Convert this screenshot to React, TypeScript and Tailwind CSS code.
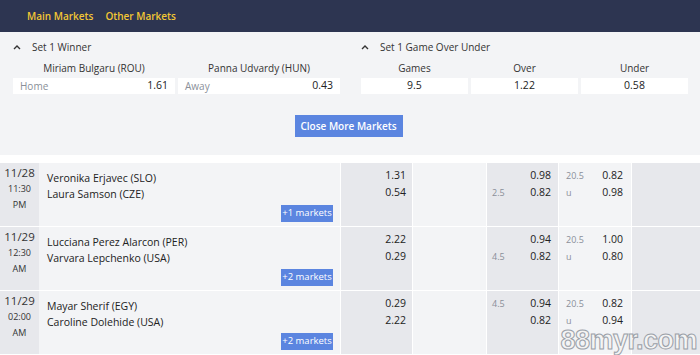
import React from "react";

const font = { fontFamily: '"Open Sans", "Noto Sans", sans-serif' };

function Chevron() {
  return (
    <svg width="8" height="6" viewBox="0 0 8 6" className="mr-[11px]">
      <path d="M1 5 L4 2 L7 5" fill="none" stroke="#333" strokeWidth="1.4" />
    </svg>
  );
}

type Row = {
  date: string;
  time: string;
  ampm: string;
  home: string;
  away: string;
  more: string;
  a: [string, string];
  c: [string, string, string, string];
  d: [string, string, string, string];
};

const rows: Row[] = [
  {
    date: "11/28",
    time: "11:30",
    ampm: "PM",
    home: "Veronika Erjavec (SLO)",
    away: "Laura Samson (CZE)",
    more: "+1 markets",
    a: ["1.31", "0.54"],
    c: ["", "0.98", "2.5", "0.82"],
    d: ["20.5", "0.82", "u", "0.98"],
  },
  {
    date: "11/29",
    time: "12:30",
    ampm: "AM",
    home: "Lucciana Perez Alarcon (PER)",
    away: "Varvara Lepchenko (USA)",
    more: "+2 markets",
    a: ["2.22", "0.29"],
    c: ["", "0.94", "4.5", "0.82"],
    d: ["20.5", "1.00", "u", "0.80"],
  },
  {
    date: "11/29",
    time: "02:00",
    ampm: "AM",
    home: "Mayar Sherif (EGY)",
    away: "Caroline Dolehide (USA)",
    more: "+2 markets",
    a: ["0.29", "2.22"],
    c: ["4.5", "0.94", "", "0.82"],
    d: ["20.5", "0.82", "u", "0.94"],
  },
];

function OddLine({ label, value }: { label: string; value: string }) {
  return (
    <div className="flex h-[17px] items-center justify-between">
      <span className="text-[9px] text-[#8a8f99]">{label}</span>
      <span className="text-[10.5px] text-[#222]">{value}</span>
    </div>
  );
}

export default function App() {
  return (
    <div className="relative w-[700px] h-[355px] overflow-hidden bg-white" style={font}>
      {/* header */}
      <div className="h-[32px] bg-[#2d3551] flex items-center pl-[27px] gap-[12px]">
        <span className="text-[10px] font-semibold text-[#f3c734] whitespace-nowrap">Main Markets</span>
        <span className="text-[10px] font-semibold text-[#f3c734] whitespace-nowrap">Other Markets</span>
      </div>

      {/* expanded markets */}
      <div className="h-[123px] bg-[#f3f4f6] pt-[8px]">
        <div className="flex">
          <div className="w-[350px] pl-[13px]">
            <div className="flex items-center h-[14px] text-[10px] text-[#333]">
              <Chevron />
              Set 1 Winner
            </div>
            <div className="flex gap-[3px] mt-[6px]">
              {[
                ["Miriam Bulgaru (ROU)", "Home", "1.61"],
                ["Panna Udvardy (HUN)", "Away", "0.43"],
              ].map(([n, l, v]) => (
                <div key={n} className="w-[162px]">
                  <div className="h-[16px] flex items-center justify-center text-[10px] text-[#333]">{n}</div>
                  <div className="mt-[2px] h-[16px] bg-white flex items-center justify-between px-[7px]">
                    <span className="text-[10px] text-[#8a8f99]">{l}</span>
                    <span className="text-[10.5px] text-[#222]">{v}</span>
                  </div>
                </div>
              ))}
            </div>
          </div>
          <div className="w-[350px] pl-[11px]">
            <div className="flex items-center h-[14px] text-[10px] text-[#333]">
              <Chevron />
              Set 1 Game Over Under
            </div>
            <div className="flex gap-[3px] mt-[6px]">
              {[
                ["Games", "9.5"],
                ["Over", "1.22"],
                ["Under", "0.58"],
              ].map(([n, v]) => (
                <div key={n} className="w-[107px]">
                  <div className="h-[16px] flex items-center justify-center text-[10px] text-[#333]">{n}</div>
                  <div className="mt-[2px] h-[16px] bg-white flex items-center justify-center">
                    <span className="text-[10.5px] text-[#222]">{v}</span>
                  </div>
                </div>
              ))}
            </div>
          </div>
        </div>
        <div className="flex justify-center mt-[21px] pr-[3px]">
          <div className="w-[108px] h-[22px] bg-[#5b85e0] text-white text-[10px] font-semibold flex items-center justify-center whitespace-nowrap">
            Close More Markets
          </div>
        </div>
      </div>

      {/* rows */}
      <div className="mt-[8px] flex flex-col gap-[1px]">
        {rows.map((r, i) => (
          <div
            key={i}
            className="grid grid-cols-[38px_301px_71px_73px_71px_72px_70px] gap-x-[1px] h-[63px]"
          >
            <div className="bg-[#e7e8ec] flex flex-col items-center pt-[2px] -mr-[1px]">
              <span className="text-[11.5px] leading-[16px] text-[#333]">{r.date}</span>
              <span className="text-[9px] leading-[16px] text-[#333]">{r.time}</span>
              <span className="text-[9px] leading-[16px] text-[#333]">{r.ampm}</span>
            </div>
            <div className="bg-[#f3f4f6] pl-[8px] pr-[7px] pt-[7px] flex flex-col">
              <span className="text-[10.5px] leading-[16px] text-[#222] whitespace-nowrap">{r.home}</span>
              <span className="text-[10.5px] leading-[16px] text-[#222] whitespace-nowrap">{r.away}</span>
              <div className="flex justify-end mt-auto mb-[4px]">
                <span className="h-[17px] w-[52px] bg-[#5b85e0] text-white text-[9.5px] flex items-center justify-center whitespace-nowrap">
                  {r.more}
                </span>
              </div>
            </div>
            <div className="bg-[#e7e8ec] pt-[4px] pr-[6px] flex flex-col items-end">
              <span className="h-[17px] flex items-center text-[10.5px] text-[#222]">{r.a[0]}</span>
              <span className="h-[17px] flex items-center text-[10.5px] text-[#222]">{r.a[1]}</span>
            </div>
            <div className="bg-[#f3f4f6]" />
            <div className="bg-[#e7e8ec] pt-[4px] pl-[5px] pr-[7px]">
              <OddLine label={r.c[0]} value={r.c[1]} />
              <OddLine label={r.c[2]} value={r.c[3]} />
            </div>
            <div className="bg-[#f3f4f6] pt-[4px] pl-[7px] pr-[8px]">
              <OddLine label={r.d[0]} value={r.d[1]} />
              <OddLine label={r.d[2]} value={r.d[3]} />
            </div>
            <div className="bg-[#e7e8ec]" />
          </div>
        ))}
      </div>

      {/* watermark */}
      <div
        className="absolute right-[3px] bottom-[0px] text-[27px] leading-[30px] font-bold text-[#f4f4f4] tracking-[-0.5px] whitespace-nowrap"
        style={{
          fontFamily: '"Liberation Sans", sans-serif',
          WebkitTextStroke: "1px #9aa0a8",
        }}
      >
        88myr.com
      </div>
    </div>
  );
}
